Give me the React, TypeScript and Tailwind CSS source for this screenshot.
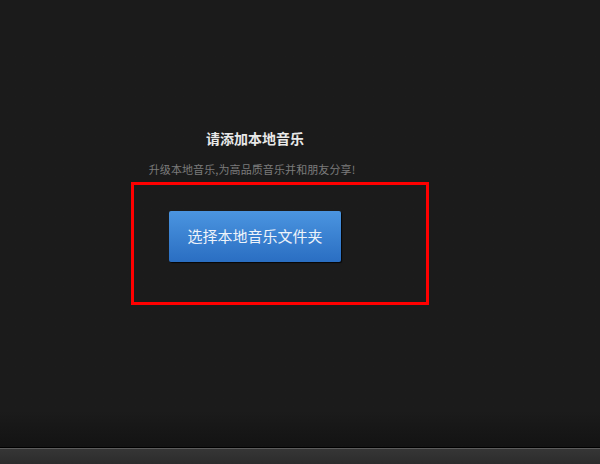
export default function App() {
  return (
    <div
      className="w-[600px] h-[464px] flex flex-col bg-[#1b1b1b] overflow-hidden"
      style={{ fontFamily: '"Noto Sans CJK SC", "Liberation Sans", sans-serif' }}
    >
      {/* main panel */}
      <div className="h-[447px] flex flex-col bg-gradient-to-b from-[#1b1b1b] from-92% to-[#131313]">
        <div className="pt-[130px] pl-[131px]">
          <div className="w-[248px] flex flex-col items-center">
            <h1 className="text-[14px] leading-[16px] font-bold text-[#e8e8e8]">请添加本地音乐</h1>
            <p className="mt-[16px] text-[11px] leading-[14px] text-[#7c7c7c] -translate-x-[3px] tracking-[0.1px]">
              升级本地音乐,为高品质音乐并和朋友分享!
            </p>
          </div>
          <div className="mt-[6px] w-[298px] h-[123px] border-[3px] border-[#ff0000] pt-[26px] pl-[35px]">
            <button className="w-[172px] h-[51px] rounded-[2px] bg-gradient-to-b from-[#4b95e0] to-[#2a6ec2] text-[15px] text-[#eef3fa] shadow-[1px_1px_1px_rgba(0,0,0,0.8)]">
              选择本地音乐文件夹
            </button>
          </div>
        </div>
      </div>
      {/* bottom bar */}
      <div className="h-px bg-black" />
      <div className="h-px bg-[#5c5c5c]" />
      <div className="flex-1 bg-gradient-to-b from-[#363636] to-[#2c2c2c]" />
    </div>
  )
}
